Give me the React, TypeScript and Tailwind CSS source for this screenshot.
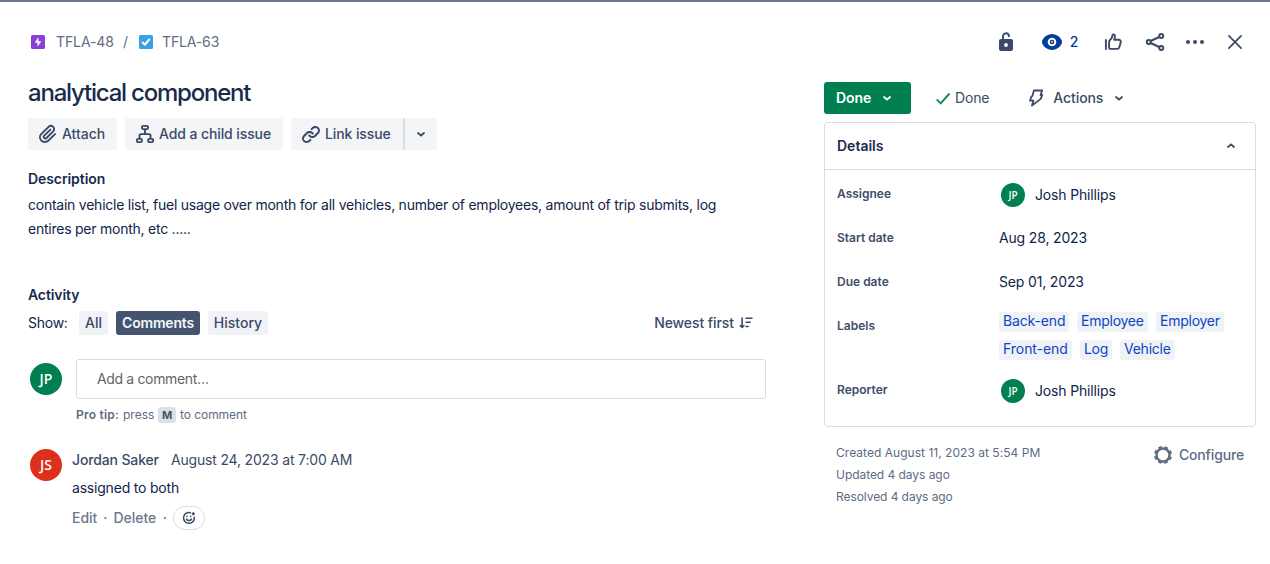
import type { ReactNode } from 'react';

type IconProps = { className?: string };

function Chevron({ className = '' }: IconProps) {
  return (
    <svg viewBox="0 0 10 10" className={`h-[10px] w-[10px] shrink-0 ${className}`} fill="none" stroke="currentColor" strokeWidth="1.8" strokeLinecap="round" strokeLinejoin="round">
      <path d="M2 4 5 6.7 8 4" />
    </svg>
  );
}

function EpicIcon() {
  return (
    <svg viewBox="0 0 14 14" className="h-[14px] w-[14px]">
      <rect width="14" height="14" rx="1.5" fill="#8740d8" />
      <path d="M7.2 3 4.2 7.5h2.6V11l3.1-4.6H7.2z" fill="#fff" stroke="#fff" strokeWidth=".5" strokeLinejoin="round" />
    </svg>
  );
}

function TaskIcon() {
  return (
    <svg viewBox="0 0 14 14" className="h-[14px] w-[14px]">
      <rect width="14" height="14" rx="1.5" fill="#3b9fe4" />
      <path d="M3.7 7.5 6 9.7 10.2 4.5" fill="none" stroke="#fff" strokeWidth="2" strokeLinecap="round" strokeLinejoin="round" />
    </svg>
  );
}

function ClipIcon() {
  return (
    <svg viewBox="0 0 24 24" className="h-6 w-6" fill="currentColor">
      <path d="M11.643 17.965c-1.53 1.495-4.016 1.496-5.542.004a3.773 3.773 0 0 1 .002-5.412l7.147-6.985a2.316 2.316 0 0 1 3.233-.003c.893.873.895 2.282.004 3.153l-6.703 6.55a.653.653 0 0 1-.914-.008.62.62 0 0 1 0-.902l6.229-6.087a.941.941 0 0 0 0-1.353.995.995 0 0 0-1.384 0l-6.23 6.087a2.502 2.502 0 0 0 0 3.607 2.643 2.643 0 0 0 3.683.009l6.703-6.55a4.14 4.14 0 0 0-.004-5.858 4.308 4.308 0 0 0-6 .002l-7.148 6.985a5.655 5.655 0 0 0-.002 8.118c2.29 2.237 6.015 2.238 8.307-.003l6.714-6.56a.941.941 0 0 0 0-1.353.995.995 0 0 0-1.384 0l-6.711 6.56z" />
    </svg>
  );
}

function ChildIcon() {
  return (
    <svg viewBox="0 0 20 20" className="h-5 w-5" fill="none" stroke="currentColor" strokeWidth="1.9">
      <rect x="7" y="1.9" width="6" height="3.2" rx="1.2" />
      <rect x="1.9" y="14.9" width="5" height="3.2" rx="1.2" />
      <rect x="13.1" y="14.9" width="5" height="3.2" rx="1.2" />
      <path d="M10 5v5M4.5 15v-3.4A1.5 1.5 0 0 1 6 10.1h8a1.5 1.5 0 0 1 1.5 1.5V15" />
    </svg>
  );
}

function LinkIcon() {
  return (
    <svg viewBox="0 0 24 24" className="h-6 w-6" fill="currentColor">
      <path d="M12.856 5.457l-.937.92a1.002 1.002 0 0 0 0 1.437 1.047 1.047 0 0 0 1.463 0l.984-.966c.967-.95 2.542-1.135 3.602-.288a2.54 2.54 0 0 1 .203 3.81l-2.903 2.852a2.646 2.646 0 0 1-3.696 0l-1.11-1.09L9 13.57l1.108 1.089c1.822 1.788 4.802 1.788 6.622 0l2.905-2.852a4.558 4.558 0 0 0-.357-6.82c-1.893-1.517-4.695-1.226-6.422.47" />
      <path d="M11.144 19.543l.937-.92a1.002 1.002 0 0 0 0-1.437 1.047 1.047 0 0 0-1.462 0l-.985.966c-.967.95-2.542 1.135-3.602.288a2.54 2.54 0 0 1-.203-3.81l2.903-2.852a2.646 2.646 0 0 1 3.696 0l1.11 1.09L15 11.43l-1.108-1.089c-1.822-1.788-4.802-1.788-6.622 0l-2.905 2.852a4.558 4.558 0 0 0 .357 6.82c1.893 1.517 4.695 1.226 6.422-.47" />
    </svg>
  );
}

function UnlockIcon() {
  return (
    <svg viewBox="0 0 16 20" className="h-5 w-4">
      <path d="M5 8V4.100a3 3 0 0 1 5.900-.5v.7" fill="none" stroke="currentColor" strokeWidth="1.900" strokeLinecap="round" />
      <path fill="currentColor" fillRule="evenodd" d="M3 7.100h10a2 2 0 0 1 2 2v8a2 2 0 0 1-2 2H3a2 2 0 0 1-2-2v-8a2 2 0 0 1 2-2Zm5 4a1.900 1.900 0 1 0 0 3.800 1.900 1.900 0 0 0 0-3.800Z" />
    </svg>
  );
}

function EyeIcon() {
  return (
    <svg viewBox="0 0 20 16" className="h-4 w-5">
      <path d="M10 0C5.4 0 0 4.2 0 8s5.4 8 10 8 10-4.200 10-8-5.400-8-10-8Z" fill="currentColor" />
      <circle cx="10" cy="8" r="4.300" fill="#fff" />
      <circle cx="10" cy="8" r="2.300" fill="currentColor" />
      <circle cx="10" cy="7.800" r=".9" fill="#fff" />
    </svg>
  );
}

function LikeIcon() {
  return (
    <svg viewBox="0 0 18 18" className="h-[18px] w-[18px]" fill="none" stroke="currentColor" strokeWidth="1.9" strokeLinecap="round" strokeLinejoin="round">
      <path d="M1.900 7v9M5.100 15V9.100c0-.8.300-1.400.800-2L7.400 5.300c.5-.7.800-1.400.900-2.300l.1-.7c.2-1.400 2.500-1.200 2.500.7 0 1.300-.3 2.500-.8 3.700h4.700c1.400 0 2.300 1.200 1.900 2.500l-1.400 5c-.3 1.100-1 1.700-2.100 1.700H6.600c-.9 0-1.500-.4-1.500-.9Z" />
    </svg>
  );
}

function ShareIcon() {
  return (
    <svg viewBox="0 0 20 20" className="h-5 w-5" fill="none" stroke="currentColor" strokeWidth="2">
      <circle cx="3.8" cy="10" r="2" />
      <circle cx="16.2" cy="4" r="2" />
      <circle cx="16.2" cy="16" r="2" />
      <path d="m5.600 9 8.600-4M5.600 11l8.600 4" />
    </svg>
  );
}

function MoreIcon() {
  return (
    <svg viewBox="0 0 20 6" className="h-[6px] w-5" fill="currentColor">
      <circle cx="3" cy="3" r="2" />
      <circle cx="10" cy="3" r="2" />
      <circle cx="17" cy="3" r="2" />
    </svg>
  );
}

function CloseIcon() {
  return (
    <svg viewBox="0 0 16 16" className="h-4 w-4" fill="none" stroke="currentColor" strokeWidth="1.7" strokeLinecap="round">
      <path d="m1.900 1.900 12.200 12.200M14.100 1.900 1.900 14.100" />
    </svg>
  );
}

function BoltIcon() {
  return (
    <svg viewBox="0 0 16 20" className="h-5 w-4" fill="none" stroke="currentColor" strokeWidth="1.8" strokeLinejoin="round">
      <path d="M5.900 2.500h8.300L12.500 7h1.700l-1.500 3.900L4 17.600l1.400-4.900H2l1.300-4 1.200-.900Z" />
    </svg>
  );
}

function GearIcon() {
  return (
    <svg viewBox="0 0 20 20" className="h-5 w-5" fill="none" stroke="currentColor">
      <circle cx="10" cy="10" r="6.5" strokeWidth="2.400" />
      <circle cx="10" cy="10" r="7.900" strokeWidth="2.200" strokeDasharray="3.500 2.705" strokeDashoffset="1.750" transform="rotate(22.5 10 10)" />
    </svg>
  );
}

function SortIcon() {
  return (
    <svg viewBox="0 0 14 12" className="h-3 w-[14px]" fill="none" stroke="currentColor" strokeLinecap="round" strokeLinejoin="round">
      <path d="M3.100 1v9M1.300 8.700 3.100 10.500 4.900 8.700" strokeWidth="1.600" />
      <path d="M7 1.300h6M7 5.300h4.200M7 9.500h2.200" strokeWidth="1.400" />
    </svg>
  );
}

function SmileIcon() {
  return (
    <svg viewBox="0 0 14 14" className="h-[14px] w-[14px]" fill="none" stroke="currentColor" strokeWidth="1.500" strokeLinecap="round">
      <path d="M8.300 1.700a5.400 5.400 0 1 0 4 4.500" />
      <path d="M4.500 8.100c.9 2 4.100 2 5 0" />
      <path d="M5.100 5.400v.1M8.700 5.400v.1" strokeWidth="1.600" />
      <path d="M11.300 1.900v1.800M10.400 2.800h1.800" strokeWidth="1.600" />
    </svg>
  );
}

function Avatar({ initials, large = false, red = false }: { initials: string; large?: boolean; red?: boolean }) {
  return (
    <span
      className={`flex shrink-0 items-center justify-center rounded-full font-['Open_Sans',sans-serif] font-semibold tracking-normal text-white ${large ? 'h-8 w-8 text-[14px]' : 'h-6 w-6 text-[10px]'} ${red ? 'bg-[#de2f1b]' : 'bg-[#007f50]'}`}
    >
      {initials}
    </span>
  );
}

function ToolButton({ icon, children, className }: { icon: ReactNode; children: ReactNode; className: string }) {
  return (
    <button className={`flex h-8 items-center rounded-[3px] bg-[#f4f5f7] pl-2 font-medium ${className}`}>
      <span className="flex w-6 shrink-0 justify-center">{icon}</span>
      <span className="ml-[2px] whitespace-nowrap">{children}</span>
    </button>
  );
}

function Field({ label, className, children }: { label: string; className: string; children: ReactNode }) {
  return (
    <div className={`flex pl-3 ${className}`}>
      <div className="mt-[3px] w-[162px] shrink-0 text-[12px] leading-4 font-semibold text-[#3e4d69]">{label}</div>
      <div className="tracking-[-0.16px] text-[#10244a]">{children}</div>
    </div>
  );
}

function Label({ children, className }: { children: ReactNode; className: string }) {
  return <span className={`h-5 rounded-[3px] bg-[#f1f2f6] pl-1 leading-[18px] whitespace-nowrap text-[#0747c4] ${className}`}>{children}</span>;
}

function Person() {
  return (
    <div className="ml-[2px] flex items-center gap-[10px]">
      <Avatar initials="JP" />
      <span>Josh Phillips</span>
    </div>
  );
}

function IssueMain() {
  return (
    <main className="w-[738px]">
      <h1 className="mt-5 h-[30px] text-[24px] leading-[30px] font-medium tracking-[-1.22px] text-[#172b4d]">analytical component</h1>
      <div className="mt-[10px] flex gap-2 text-[#3b4a68]">
        <ToolButton icon={<ClipIcon />} className="w-[89px]">Attach</ToolButton>
        <ToolButton icon={<ChildIcon />} className="w-[158px] tracking-[-0.1px]">Add a child issue</ToolButton>
        <div className="flex">
          <ToolButton icon={<LinkIcon />} className="w-[112px] rounded-r-none tracking-[-0.1px]">Link issue</ToolButton>
          <button className="flex h-8 w-[34px] items-center justify-center rounded-r-[3px] border-l-2 border-[#dadee4] bg-[#f4f5f7]">
            <Chevron />
          </button>
        </div>
      </div>
      <h2 className="mt-[19px] h-5 font-semibold tracking-[-0.08px] text-[#172b4d]">Description</h2>
      <p className="mt-[4px] leading-6 tracking-[-0.243px] text-[#10244a]">
        contain vehicle list, fuel usage over month for all vehicles, number of employees, amount of trip submits, log
        <br />
        entires per month, etc .....
      </p>
      <h2 className="mt-[44px] h-5 font-semibold tracking-[-0.1px] text-[#172b4d]">Activity</h2>
      <div className="mt-[6px] flex h-6 items-center text-[#3b4a68]">
        <span className="w-[51px] tracking-[-0.25px] text-[#10244a]">Show:</span>
        <div className="flex gap-2 text-center font-medium">
          <button className="h-6 w-[29px] rounded-[3px] bg-[#f1f2f6]">All</button>
          <button className="h-6 w-[84px] rounded-[3px] bg-[#44546f] font-semibold tracking-[-0.2px] text-[#f4f6fa]">Comments</button>
          <button className="h-6 w-[60px] rounded-[3px] bg-[#f1f2f6]">History</button>
        </div>
        <button className="mr-[13px] ml-auto flex items-center gap-[5px] font-medium tracking-[-0.08px]">
          Newest first
          <SortIcon />
        </button>
      </div>
      <div className="mt-6 flex">
        <div className="mt-1 ml-[2px] w-[46px]">
          <Avatar initials="JP" large />
        </div>
        <div className="flex-1">
          <div className="flex h-10 items-center rounded-[3px] border border-[#d9dce2] pl-5 tracking-[-0.35px] text-[#636466]">Add a comment…</div>
          <div className="mt-2 flex h-4 items-center text-[12px] leading-4 text-[#5e6c84]">
            <b className="w-11 font-semibold tracking-[0.22px]">Pro tip:</b>
            <span className="ml-[3px] w-[31px]">press</span>
            <kbd className="mx-1 h-4 w-[18px] rounded-[3px] bg-[#dcdfe4] text-center font-[Inter,sans-serif] text-[11px] leading-4 font-bold text-[#44546f]">M</kbd>
            <span className="tracking-[-0.06px]">to comment</span>
          </div>
        </div>
      </div>
      <div className="mt-[26px] flex">
        <div className="ml-[2px] w-[42px]">
          <Avatar initials="JS" large red />
        </div>
        <div>
          <div className="mt-[1px] flex h-5 gap-3 text-[#3b4a68]">
            <span className="font-medium tracking-[-0.14px]">Jordan Saker</span>
            <span className="tracking-[-0.17px]">August 24, 2023 at 7:00 AM</span>
          </div>
          <p className="mt-2 h-5 tracking-[-0.2px] text-[#10244a]">assigned to both</p>
          <div className="mt-2 flex h-6 items-center font-medium text-[#6b778c]">
            <span>Edit</span>
            <span className="w-4 text-center">·</span>
            <span>Delete</span>
            <span className="w-[17px] text-center">·</span>
            <button className="flex h-6 w-8 items-center justify-center rounded-full border border-[#d9dce2] text-[#3b4a68]">
              <SmileIcon />
            </button>
          </div>
        </div>
      </div>
    </main>
  );
}

function IssueSidebar() {
  return (
    <aside className="w-[432px] pt-6">
      <div className="flex h-8 items-center font-medium text-[#3b4a68]">
        <button className="flex h-8 w-[87px] items-center gap-[11px] rounded-[3px] bg-[#007f50] pl-3 font-semibold tracking-[-0.1px] text-white">
          Done
          <Chevron />
        </button>
        <span className="ml-6 flex items-center gap-1 font-normal tracking-[-0.15px]">
          <svg viewBox="0 0 16 14" className="h-[14px] w-4" fill="none" stroke="#1f845a" strokeWidth="1.9">
            <path d="m1.700 8.300 4 4L14.500 2.500" />
          </svg>
          Done
        </span>
        <button className="ml-[39px] flex items-center">
          <BoltIcon />
          <span className="ml-[9px] tracking-[-0.1px]">Actions</span>
          <Chevron className="ml-[11px]" />
        </button>
      </div>
      <section className="mt-2 h-[305px] rounded-[4px] border border-[#d9dce2]">
        <header className="flex h-[47px] items-center justify-between border-b border-[#d9dce2] pr-[19px] pl-3">
          <h2 className="font-semibold text-[#172b4d]">Details</h2>
          <Chevron className="rotate-180 text-[#3b4a68]" />
        </header>
        <div className="pt-[13px]">
          <Field label="Assignee" className="h-[44px]"><Person /></Field>
          <Field label="Start date" className="h-[44px]"><p className="mt-px">Aug 28, 2023</p></Field>
          <Field label="Due date" className="h-[44px]"><p className="mt-px">Sep 01, 2023</p></Field>
          <Field label="Labels" className="h-[64px]">
            <div className="-mt-[3px] flex w-[240px] flex-wrap gap-2">
              <Label className="w-[70px] tracking-[-0.15px]">Back-end</Label>
              <Label className="w-[71px] tracking-[-0.25px]">Employee</Label>
              <Label className="w-[68px] tracking-[-0.25px]">Employer</Label>
              <Label className="w-[73px] tracking-[-0.05px]">Front-end</Label>
              <Label className="w-8 tracking-[-0.3px]">Log</Label>
              <Label className="w-[55px] tracking-[-0.25px]">Vehicle</Label>
            </div>
          </Field>
          <Field label="Reporter" className="h-8"><Person /></Field>
        </div>
      </section>
      <footer className="mt-[15px] flex justify-between pr-3 pl-3 text-[#5e6c84]">
        <div className="text-[12px] leading-[22px]">
          <p className="tracking-[0.03px]">Created August 11, 2023 at 5:54 PM</p>
          <p className="tracking-[-0.05px]">Updated 4 days ago</p>
          <p className="tracking-[-0.07px]">Resolved 4 days ago</p>
        </div>
        <button className="mt-[3px] flex h-5 items-center gap-[6px] font-medium tracking-[-0.16px]">
          <GearIcon />
          Configure
        </button>
      </footer>
    </aside>
  );
}

export default function App() {
  return (
    <div className="h-[564px] overflow-hidden border-t-2 border-[#6b778c] bg-white font-[Inter,sans-serif] text-[14px] leading-5">
      <header className="flex h-14 items-center justify-between pt-6 pr-[27px] pl-[31px] text-[#3b4a68]">
        <nav className="flex items-center text-[#5e6c84]">
          <EpicIcon />
          <span className="ml-[11px] w-[58px] tracking-[-0.1px]">TFLA-48</span>
          <span className="mr-[10px] ml-2 w-[7px] text-center">/</span>
          <TaskIcon />
          <span className="ml-[9px] tracking-[-0.15px]">TFLA-63</span>
        </nav>
        <div className="flex items-center">
          <UnlockIcon />
          <button className="ml-7 flex items-center gap-[7px] font-medium text-[#043b9c]">
            <EyeIcon />
            <span className="w-[10px]">2</span>
          </button>
          <span className="ml-[25px]"><LikeIcon /></span>
          <span className="ml-[23px]"><ShareIcon /></span>
          <span className="ml-5"><MoreIcon /></span>
          <span className="ml-[22px]"><CloseIcon /></span>
        </div>
      </header>
      <div className="flex gap-[58px] pl-7">
        <IssueMain />
        <IssueSidebar />
      </div>
    </div>
  );
}
